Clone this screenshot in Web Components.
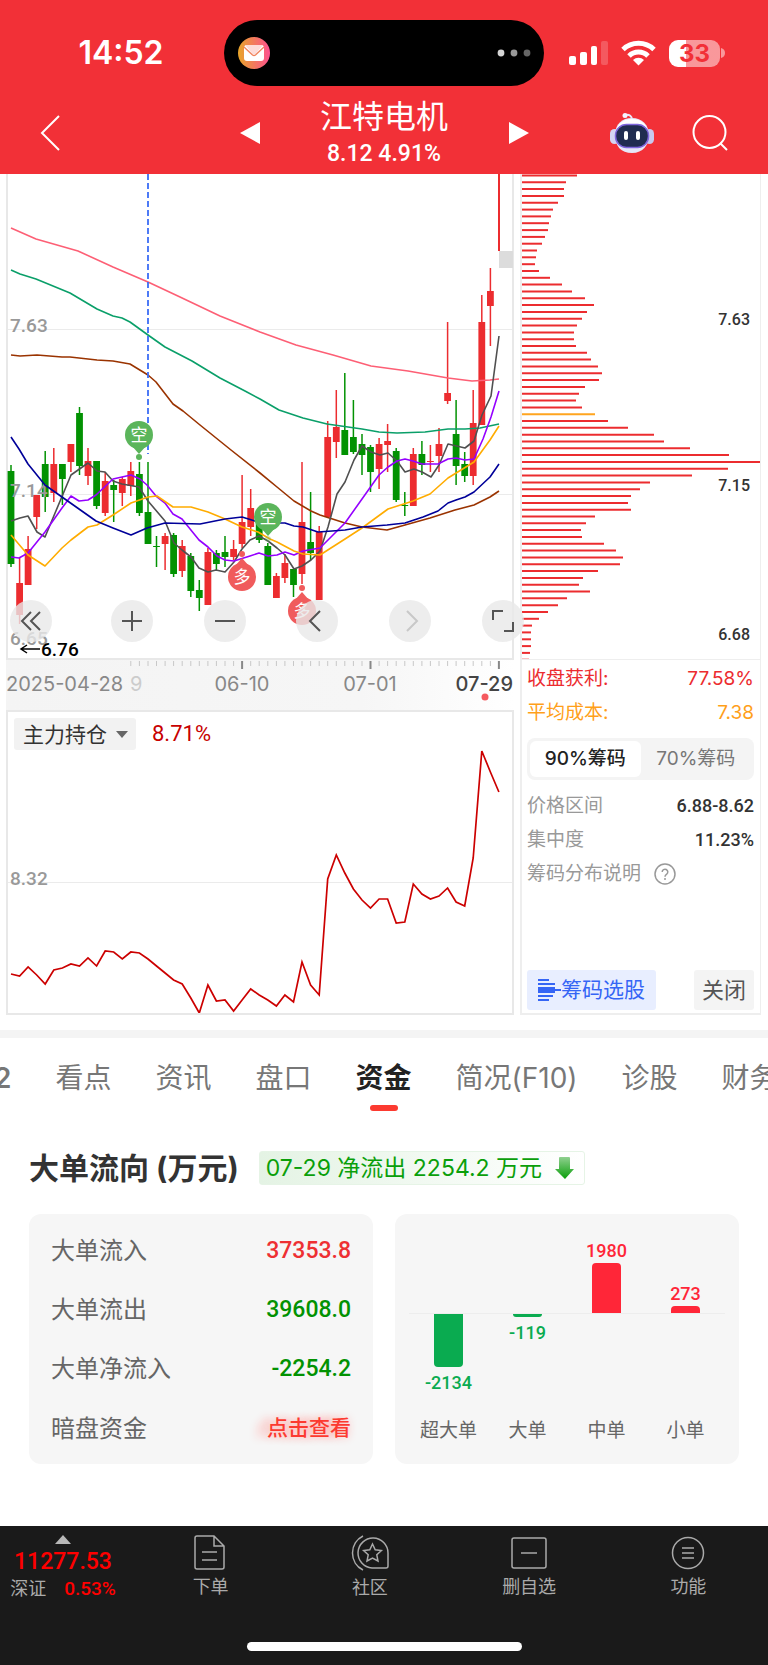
<!DOCTYPE html>
<html lang="zh-CN">
<head>
<meta charset="utf-8">
<meta name="viewport" content="width=device-width, initial-scale=1">
<title>江特电机</title>
<style>
  body {
    margin: 0;
    background: #fff;
    color: #333;
    font-family: Inter, "Noto Sans CJK SC", sans-serif;
    --num: Roboto, "Noto Sans CJK SC", sans-serif;
    --red: #f23037;
  }
  main {
    display: grid;
    grid-template-columns: minmax(0, 508fr) minmax(0, 241fr);
    gap: 6px;
    padding: 0 7px 0 6px;
  }
</style>
</head>
<body>
<status-bar>14:52</status-bar>
<stock-header>
  <span slot="name">江特电机</span>
  <span slot="quote">8.12 4.91%</span>
</stock-header>
<main>
  <div class="charts">
    <kline-chart></kline-chart>
    <hold-chart value="8.71%"></hold-chart>
  </div>
  <chip-panel></chip-panel>
</main>
<tab-strip></tab-strip>
<fund-flow></fund-flow>
<bottom-bar></bottom-bar>

<script>
// every element fills its shadow root the same way
class BaseElement extends HTMLElement {
  constructor() {
    super();
    this.attachShadow({mode:'open'});
    const temp = document.createElement('template');
    temp.innerHTML = this.render();
    this.shadowRoot.appendChild(temp.content.cloneNode(true));
  }
}

// Status bar
class StatusBar extends BaseElement {
  render() {
    return `
    <style>
    :host {
      display: grid;
      grid-template-columns: 1fr 320px 1fr;
      align-items: center;
      padding-top: 20px;
      background: var(--red);
      color: #fff;
    }
    .time { padding-left: 18px; text-align: center; font-size: 32px; line-height: 40px; font-weight: 600; }
    .island {
      display: flex;
      align-items: center;
      justify-content: space-between;
      box-sizing: border-box;
      height: 66px;
      padding: 0 13px;
      border-radius: 33px;
      background: #000;
    }
    .right { display: flex; align-items: center; gap: 13px; padding-left: 25px; }
    .battery { display: flex; align-items: center; gap: 1px; }
    .level {
      width: 51px;
      border-radius: 9px;
      background: linear-gradient(90deg, #fff 17px, rgba(255,255,255,.5) 17px);
      color: var(--red);
      text-align: center;
      font-size: 24px;
      line-height: 27px;
      font-weight: 700;
    }
    </style>
    <div class="time"><slot></slot></div>
    <div class="island">
      <svg width="34" height="34" viewBox="0 0 34 34">
        <defs><linearGradient id="m"><stop offset="0" stop-color="#e8a529"/><stop offset="1" stop-color="#fd5090"/></linearGradient></defs>
        <circle cx="17" cy="17" r="16" fill="url(#m)"/>
        <rect x="7" y="9" width="20" height="16" rx="3" fill="#fff"/>
        <path d="M8 9h18l-7.500 9q-1.500 1.500-3 0z" fill="#fddcd8"/>
        <path d="M7 11l8.500 8q1.500 1.200 3 0L27 11" fill="none" stroke="#f0825a" stroke-width="1.300"/>
      </svg>
      <svg width="34" height="8" viewBox="0 0 34 8">
        <circle cx="4" cy="4" r="3.400" fill="#d5d5d5"/><circle cx="17" cy="4" r="3.400" fill="#999"/><circle cx="30" cy="4" r="3.400" fill="#666"/>
      </svg>
    </div>
    <div class="right">
      <svg width="39" height="24" viewBox="0 0 39 24" fill="#fff">
        <rect y="15" width="7" height="9" rx="2"/><rect x="11" y="11" width="7" height="13" rx="2"/>
        <rect x="22" y="5" width="6" height="19" rx="2"/><rect x="32" width="7" height="24" rx="2" opacity=".2"/>
      </svg>
      <svg width="35" height="26" viewBox="0 0 35 26" fill="none" stroke="#fff" stroke-width="5">
        <path d="M2 9.500a22.500 22.500 0 0 1 31 0M8 16a13.500 13.500 0 0 1 19 0"/>
        <path d="M12 20a8 8 0 0 1 11 0l-5.500 5.500z" fill="#fff" stroke="none"/>
      </svg>
      <div class="battery">
        <div class="level">33</div>
        <svg width="4" height="10" viewBox="0 0 4 10"><path d="M0 0q4 1 4 5t-4 5z" fill="#fff" opacity=".5"/></svg>
      </div>
    </div>`;
  }
}

// Title bar
class StockHeader extends BaseElement {
  render() {
    return `
    <style>
    :host {
      display: grid;
      grid-template-columns: 1fr 290px 1fr;
      align-items: center;
      height: 76px;
      padding: 11px 0 1px;
      background: var(--red);
      color: #fff;
    }
    button { display: block; padding: 0; border: 0; background: none; color: inherit; font: inherit; }
    .mid { display: flex; align-items: center; justify-content: space-between; }
    .title { padding-bottom: 3px; text-align: center; }
    h1 { margin: 0; font-size: 32px; line-height: 36px; font-weight: 400; }
    p { margin: 0; padding-top: 5px; font: 500 23px/28px var(--num); }
    .back { justify-self: start; margin-left: 40px; }
    .tools { display: flex; align-items: center; justify-content: flex-end; gap: 38px; padding-right: 40px; }
    </style>
    <button class="back" aria-label="返回">
      <svg width="20" height="38" viewBox="0 0 20 38" fill="none" stroke="#fff" stroke-width="2"><path d="M19 2L2 19l17 17"/></svg>
    </button>
    <div class="mid">
      <button aria-label="上一只"><svg width="21" height="24" viewBox="0 0 21 24"><path d="M1 12L21 1v22z" fill="#fff"/></svg></button>
      <div class="title">
        <h1><slot name="name"></slot></h1>
        <p><slot name="quote"></slot></p>
      </div>
      <button aria-label="下一只"><svg width="21" height="24" viewBox="0 0 21 24"><path d="M21 12L1 1v22z" fill="#fff"/></svg></button>
    </div>
    <div class="tools">
      <button aria-label="智能助手">
        <svg width="44" height="42" viewBox="0 0 44 42">
          <path d="M15 3q7-1 7 5" fill="none" stroke="#e8e8fa" stroke-width="2"/>
          <circle cx="15" cy="3.500" r="2.500" fill="#f4f4ff"/>
          <rect x="0" y="17" width="9" height="15" rx="4.500" fill="#d4d4f2"/><rect x="35" y="17" width="9" height="15" rx="4.500" fill="#c9c9ee"/>
          <path d="M22 6C32 6 39 13 39 23S33 41 22 41 5 34 5 23 12 6 22 6z" fill="#e6e7f8"/>
          <path d="M22 7c8 0 13 4 15 9H7c2-5 7-9 15-9z" fill="#fff"/>
          <rect x="5.500" y="12.500" width="33" height="23" rx="11" fill="#202c50" stroke="#7f66dc" stroke-width="1.500"/>
          <rect x="14" y="19" width="4" height="9" rx="2" fill="#fff"/><rect x="26" y="19" width="4" height="9" rx="2" fill="#fff"/>
        </svg>
      </button>
      <button aria-label="搜索">
        <svg width="36" height="36" viewBox="0 0 36 36" fill="none" stroke="#fff" stroke-width="2"><circle cx="17.500" cy="17" r="16"/><path d="M28 28l7 7"/></svg>
      </button>
    </div>`;
  }
}

// x of the n-th trading day, shared by both charts
const dayX = n => +(11 + n * 8.56).toFixed(1);

// Candles: colour, high, body top, body bottom, low
const candles = [
  ['g',465,471,564,567],['r',557,583,615,624],['r',536,549,585,585],['r',495,495,517,529],['g',451,464,497,512],
  ['r',448,464,493,502],['g',464,464,479,505],['r',444,444,462,472],['g',407,413,466,475],['r',448,461,476,485],
  ['g',461,461,506,509],['r',472,481,513,516],['g',480,485,490,522],['r',477,479,493,506],['r',462,471,486,496],
  ['g',462,474,513,516],['g',462,512,544,544],['g',536,546,547,567],['r',533,536,544,570],['g',533,535,574,577],
  ['r',540,546,571,577],['g',553,556,591,597],['g',580,590,598,611],['r',548,552,605,605],['g',550,553,564,570],
  ['g',536,552,557,567],['r',540,549,557,560],['r',475,522,544,548],['r',489,508,527,536],['g',515,515,540,543],
  ['g',543,546,585,585],['r',573,576,598,598],['r',554,563,578,583],['g',569,569,585,597],['r',462,522,574,584],
  ['g',492,542,553,560],['r',526,532,600,600],['r',421,437,517,517],['r',390,427,442,458],['g',373,430,455,455],
  ['g',400,437,452,454],['g',434,444,455,475],['g',445,447,472,492],['r',438,444,469,489],['r',424,441,445,472],
  ['g',448,451,500,502],['g',492,505,506,516],['r',448,454,506,506],['g',441,454,465,475],['r',445,461,462,472],
  ['r',428,444,456,472],['r',322,393,401,404],['g',400,434,466,485],['g',452,464,476,482],['r',390,423,476,485],
  ['r',295,322,425,425],['r',268,291,306,346]
];

const averages = {
  '#fd5f75': '11,228 36,239 78,251 113,267 148,282 180,297 220,316 260,332 296,345 333,355 371,366 408,371 448,378 472,381 490,380 499,379',
  '#0a9f69': '11,270 20,274 36,279 70,293 97,309 113,316 122,318 130,322 148,335 165,347 192,361 220,378 245,391 260,399 279,410 303,418 327,424 362,429 379,432 397,433 425,432 448,429 465,429 480,428 499,424',
  '#9a3300': '11,355 20,356 37,355 62,357 70,357 97,360 113,361 130,364 148,375 156,382 173,404 183,411 200,425 231,450 260,473 277,487 294,501 311,511 320,515 345,523 362,527 387,530 405,525 430,518 455,510 474,505 490,497 499,491',
  '#505050': '11,521 20,518 28,516 37,532 45,537 71,475 88,463 97,471 105,472 113,481 122,484 139,487 148,501 165,521 174,543 182,550 191,557 199,568 208,572 216,570 225,572 234,562 242,549 250,540 259,536 268,541 277,548 285,555 294,569 302,566 311,560 320,551 328,527 337,494 345,482 354,460 362,446 371,452 380,455 388,453 397,461 405,472 414,469 422,472 431,477 439,465 448,444 465,448 474,441 482,415 491,396 499,336',
  '#9500ff': '11,557 19,558 28,553 45,532 62,508 71,496 79,501 88,500 96,495 113,479 131,475 140,479 147,485 156,496 165,503 173,514 182,519 199,540 208,547 217,556 225,560 234,561 250,556 259,553 268,556 277,555 285,552 294,555 303,551 320,548 345,523 362,499 379,475 388,467 397,461 405,459 413,461 422,464 438,464 448,459 456,458 465,460 474,459 483,439 491,417 499,391',
  '#ffac00': '11,535 28,555 45,566 62,548 71,540 88,527 97,525 113,515 131,503 148,497 157,496 173,507 191,507 208,512 225,519 242,527 258,532 270,539 277,542 294,551 303,554 320,555 345,539 362,528 388,509 413,501 430,494 448,478 474,462 490,440 499,426',
  '#000099': '11,437 19,449 28,464 45,485 62,497 79,509 96,521 113,528 131,535 147,528 165,523 200,524 225,519 242,517 255,521 270,523 285,523 294,526 303,527 318,532 332,531 345,530 362,527 387,525 405,523 423,517 438,511 448,503 456,500 465,497 474,492 490,477 499,464'
};

class KlineChart extends BaseElement {
  render() {
    const bars = candles.map(([c, hi, top, bottom, lo], i) => {
      const x = dayX(i), fill = c === 'r' ? '#ec2c2f' : '#029202';
      return `<path d="M${x} ${hi}V${lo}" stroke="${fill}" stroke-width="1.500"/><rect x="${x - 3.4}" y="${top}" width="6.800" height="${bottom - top}" fill="${fill}"/>`;
    }).join('');
    const lines = Object.entries(averages).map(([color, pts]) => `<polyline points="${pts}" stroke="${color}"/>`).join('');
    let ticks = '';
    for (let i = 14; i < 58; i++) {
      const major = [27, 42, 57].includes(i);
      ticks += `<path d="M${dayX(i)} 661v${major ? 8 : 5}" stroke="${major ? '#888' : '#c8c8c8'}" stroke-width="${major ? 2 : 1}"/>`;
    }
    const sell = (x, y, o) => `<g><circle cx="${x}" cy="${y + 22}" r="3" fill="#5bb55b" opacity="${o}"/><circle cx="${x}" cy="${y}" r="14" fill="#5bb55b"/><path d="M${x - 7} ${y + 11}h14l-7 8z" fill="#5bb55b"/><text x="${x}" y="${y + 6}">空</text></g>`;
    const buy = (x, y) => `<g><circle cx="${x}" cy="${y - 23}" r="3" fill="#f05b5c"/><circle cx="${x}" cy="${y}" r="14" fill="#f05b5c"/><path d="M${x - 7} ${y - 11}h14l-7-8z" fill="#f05b5c"/><text x="${x}" y="${y + 6}">多</text></g>`;
    return `
    <style>
    :host { display: block; position: relative; z-index: 1; }
    .plot { display: block; width: 100%; }
    .scale { font: 500 19px var(--num); fill: #999; }
    .dates { font-size: 20px; fill: #888; }
    .marks { font-size: 17px; fill: #fff; text-anchor: middle; }
    .lines { fill: none; stroke-width: 1.6; stroke-linejoin: round; }
    /* round buttons floating over the plot */
    .controls {
      position: absolute;
      left: 4px;
      right: -10px;
      bottom: 68px;
      display: flex;
      justify-content: space-between;
    }
    button {
      width: 42px;
      height: 42px;
      padding: 0;
      border: 0;
      border-radius: 50%;
      background: rgba(232,232,232,.8);
      color: #555;
    }
    button:first-child { margin-right: 8px; }
    button:disabled { color: #c8c8c8; }
    button svg { display: block; margin: auto; fill: none; stroke: currentColor; stroke-width: 2; }
    </style>
    <svg class="plot" viewBox="6 174 508 536">
      <defs><linearGradient id="ax"><stop offset="0" stop-color="#f4f4f4"/><stop offset=".7" stop-color="#f6f6f6"/><stop offset="1" stop-color="#fff"/></linearGradient></defs>
      <rect x="6" y="660" width="508" height="50" fill="url(#ax)"/>
      <path d="M8 329.500h504M8 494.500h504" stroke="#ebebeb"/>
      <path d="M7 174V659H513V174" fill="none" stroke="#e8e8e8" stroke-width="2"/>
      <rect x="499" y="251" width="14" height="17" fill="#dcdcdc"/>
      ${bars}
      <path d="M499 174V251" stroke="#ec2c2f" stroke-width="2"/>
      <g class="scale"><text x="10" y="332">7.63</text><text x="10" y="497">7.14</text><text x="10" y="645">6.65</text></g>
      <g class="lines">${lines}</g>
      <path d="M148 174V454" stroke="#3b6df6" stroke-width="1.800" stroke-dasharray="6 3"/>
      <path d="M40 649H21m6-4l-6 4 6 4" fill="none" stroke="#000" stroke-width="1.500"/>
      <g class="scale"><text x="41" y="656" style="fill:#000">6.76</text></g>
      <g class="marks">${sell(139, 435, 1)}${sell(268, 517, .3)}${buy(242, 577)}${buy(302, 611)}</g>
      ${ticks}
      <g class="dates">
        <text x="6" y="691">2025-04-28</text><text x="130" y="691" style="fill:#ccc">9</text>
        <text x="242" y="691" text-anchor="middle">06-10</text><text x="370" y="691" text-anchor="middle">07-01</text>
        <text x="513" y="691" text-anchor="end" style="fill:#444;font-weight:500">07-29</text>
      </g>
      <circle cx="485" cy="697" r="3.500" fill="#f55a5e"/>
    </svg>
    <div class="controls">
      <button aria-label="最早"><svg width="42" height="42"><path d="M21 12l-9 9 9 9M30 12l-9 9 9 9"/></svg></button>
      <button aria-label="放大"><svg width="42" height="42"><path d="M11 21h20M21 11v20"/></svg></button>
      <button aria-label="缩小"><svg width="42" height="42"><path d="M11 21h20"/></svg></button>
      <button aria-label="向左"><svg width="42" height="42"><path d="M24 11l-10 10 10 10"/></svg></button>
      <button aria-label="向右" disabled><svg width="42" height="42"><path d="M18 11l10 10-10 10"/></svg></button>
      <button aria-label="全屏"><svg width="42" height="42"><path d="M11 20v-9h10M31 22v9h-9"/></svg></button>
    </div>`;
  }
}

// Main force holding
const holding = [974,976,967,975,984,970,968,964,966,958,966,951,952,959,952,953,959,966,973,980,984,998,1013,985,1001,1000,1011,1000,989,995,1000,1006,995,1002,962,985,995,879,855,873,889,900,908,899,899,923,922,884,894,899,896,888,902,906,858,751,772,792];

class HoldChart extends BaseElement {
  render() {
    return `
    <style>
    :host { display: block; padding-top: 6px; border: 2px solid #e8e8e8; }
    .head { display: flex; align-items: center; gap: 16px; padding-left: 6px; }
    .pick { position: relative; }
    select {
      appearance: none;
      display: block;
      width: 122px;
      height: 32px;
      padding: 0 9px;
      border: 0;
      border-radius: 3px;
      background: #f2f2f2;
      color: #333;
      font: inherit;
      font-size: 21px;
    }
    .pick svg { position: absolute; right: 8px; top: 13px; pointer-events: none; }
    output { color: #c80000; font: 400 22px/32px var(--num); }
    .plot { display: block; width: 100%; }
    text { font: 500 19px var(--num); fill: #999; }
    </style>
    <div class="head">
      <div class="pick">
        <select aria-label="指标"><option>主力持仓</option></select>
        <svg width="12" height="7"><path d="M0 0h12L6 7z" fill="#666"/></svg>
      </div>
      <output>${this.getAttribute('value')}</output>
    </div>
    <svg class="plot" viewBox="8 750 504 263">
      <path d="M8 882.500h504" stroke="#ebebeb"/>
      <text x="10" y="885">8.32</text>
      <polyline points="${holding.map((y, i) => dayX(i) + ',' + y).join(' ')}" fill="none" stroke="#cc0000" stroke-width="1.700"/>
    </svg>`;
  }
}

// Chip distribution
const chips = [55,44,42,42,36,31,29,27,26,23,20,15,14,13,17,28,40,50,63,72,65,60,55,52,52,54,65,69,76,80,77,63,57,54,60,73,86,106,132,142,168,207,239,206,170,128,118,109,106,109,73,64,59,60,82,94,101,98,76,61,57,68,45,36,26,17,10,9,9,9,8,7];

class ChipPanel extends BaseElement {
  render() {
    const rows = chips.map((w, i) => `<path d="M522 ${(175.5 + i * 6.82).toFixed(1)}h${w}" stroke="${i === 35 ? '#ffa51f' : '#ec2c2f'}"/>`).join('');
    return `
    <style>
    :host {
      display: flex;
      flex-direction: column;
      box-sizing: border-box;
      border: solid #eee;
      border-width: 0 1px 2px 2px;
      font-size: 19px;
      line-height: 34px;
    }
    .plot { display: block; width: 100%; stroke-width: 2; border-bottom: 1px solid #eee; }
    text { font: 500 16px var(--num); fill: #333; text-anchor: end; }
    .info { flex: 1; display: flex; flex-direction: column; padding: 2px 6px 3px 5px; }
    .row { display: flex; justify-content: space-between; white-space: nowrap; }
    .win { color: #ec2c2f; }
    .cost { color: #ff9f1a; }
    .seg { display: flex; margin: 8px 0 9px; padding: 3px; border-radius: 8px; background: #f4f4f4; }
    .seg button {
      flex: 1;
      padding: 0;
      border: 0;
      border-radius: 6px;
      background: none;
      color: #777;
      font: inherit;
      line-height: 36px;
      white-space: nowrap;
    }
    .seg [aria-pressed=true] { background: #fff; color: #222; font-weight: 500; }
    .note { color: #999; }
    .note b { color: #333; font: 500 18px/34px var(--num); }
    .help { justify-content: flex-start; align-items: center; gap: 13px; }
    .acts { display: flex; justify-content: space-between; margin-top: auto; }
    .acts button {
      display: flex;
      align-items: center;
      height: 40px;
      padding: 0 8px;
      border: 0;
      border-radius: 3px;
      background: #f4f4f4;
      color: #555;
      font: inherit;
      font-size: 22px;
      white-space: nowrap;
    }
    .acts .choose { padding: 0 11px; background: #e8eeff; color: #3565f5; font-size: 21px; }
    </style>
    <svg class="plot" viewBox="522 174 238 485">
      ${rows}
      <g stroke="none"><text x="750" y="325">7.63</text><text x="750" y="491">7.15</text><text x="750" y="640">6.68</text></g>
    </svg>
    <div class="info">
      <div class="row win"><span>收盘获利:</span><span>77.58%</span></div>
      <div class="row cost"><span>平均成本:</span><span>7.38</span></div>
      <div class="seg"><button aria-pressed="true">90%筹码</button><button aria-pressed="false">70%筹码</button></div>
      <div class="row note">价格区间<b>6.88-8.62</b></div>
      <div class="row note">集中度<b>11.23%</b></div>
      <div class="row note help">筹码分布说明
        <svg width="22" height="22" viewBox="0 0 22 22" fill="none" stroke="#999" stroke-width="1.500"><circle cx="11" cy="11" r="10"/><path d="M8.200 9a2.800 2.800 0 1 1 4.500 2.200q-1.700 1.200-1.700 2.600M11 15v2"/></svg>
      </div>
      <div class="acts">
        <button class="choose"><svg width="23" height="22" viewBox="0 0 23 22" stroke="#3565f5" stroke-width="2"><path d="M0 1h11M0 5h17M0 9h17M0 13h17M0 17h15M0 21h11M0 11h23"/></svg>筹码选股</button>
        <button>关闭</button>
      </div>
    </div>`;
  }
}

// Tabs, scrolled a little to the right
class TabStrip extends BaseElement {
  render() {
    const tabs = ['看点', '资讯', '盘口', '资金', '简况(F10)', '诊股', '财务'];
    return `
    <style>
    :host { display: block; margin-top: 15px; border-top: 8px solid #f4f4f4; overflow: hidden; }
    nav { display: flex; gap: 44px; margin-left: -6px; padding-top: 20px; }
    a { flex: none; color: #777; text-decoration: none; font-size: 28px; line-height: 40px; white-space: nowrap; }
    .cut { font-weight: 600; }
    .on { color: #222; font-weight: 700; }
    .on::after { content: ''; display: block; width: 28px; height: 6px; margin: 7px auto 0; border-radius: 3px; background: #fc3a30; }
    </style>
    <nav><a class="cut" href="#">2</a>${tabs.map(t => `<a href="#"${t === '资金' ? ' class="on"' : ''}>${t}</a>`).join('')}</nav>`;
  }
}

// Big order flow
const orders = [['超大单', -2134, 53], ['大单', -119, 3], ['中单', 1980, 50], ['小单', 273, 7]];

class FundFlow extends BaseElement {
  render() {
    const cols = orders.map(([name, value, h]) => {
      const bar = `<i style="height:${h}px"></i>`, num = `<b>${value}</b>`;
      return value > 0
        ? `<div class="col"><div class="up">${num}${bar}</div><div class="down"></div>${name}</div>`
        : `<div class="col"><div class="up"></div><div class="down">${bar}${num}</div>${name}</div>`;
    }).join('');
    return `
    <style>
    :host { display: block; padding: 37px 29px 62px; }
    header { display: flex; align-items: center; gap: 20px; }
    h2 { margin: 0; color: #333; font-size: 30px; line-height: 40px; font-weight: 700; white-space: nowrap; }
    .net {
      display: flex;
      align-items: center;
      gap: 13px;
      padding: 0 10px 0 6px;
      border: 1px solid #e6f4e6;
      border-radius: 3px;
      background: linear-gradient(90deg, #e4f3e4, #fff);
      color: #0a9f0a;
      font-size: 23px;
      line-height: 32px;
      white-space: nowrap;
    }
    .cards { display: grid; grid-template-columns: 1fr 1fr; gap: 22px; margin-top: 26px; }
    .card { box-sizing: border-box; height: 250px; border-radius: 12px; background: #f6f6f6; }
    dl { margin: 0; padding: 7px 22px; }
    dl div { display: flex; justify-content: space-between; align-items: center; line-height: 59px; }
    dt { color: #666; font-size: 24px; }
    dd { margin: 0; color: #029202; font: 500 23px/59px var(--num); }
    .in { color: #ee3033; }
    dd a { color: #fc3a30; font-size: 21px; text-decoration: none; text-shadow: 0 0 8px #fdb5b2, -12px 0 8px #fdb5b2; }
    .bars { position: relative; display: flex; padding: 0 14px; }
    .col { flex: 1; color: #666; text-align: center; font-size: 19px; line-height: 28px; }
    .up, .down { display: flex; flex-direction: column; align-items: center; box-sizing: border-box; height: 100px; }
    .up { justify-content: flex-end; border-bottom: 1px solid #ededed; color: #ff2638; }
    .down { height: 103px; color: #0aab50; }
    i { flex: none; width: 29px; background: currentColor; }
    .up i { border-radius: 4px 4px 0 0; }
    .down i { border-radius: 0 0 4px 4px; }
    b { padding: 0 0 1px; font: 500 18px/22px var(--num); }
    .down b { padding: 5px 0 0; }
    </style>
    <header>
      <h2>大单流向 (万元)</h2>
      <div class="net">07-29 净流出 2254.2 万元
        <svg width="19" height="22" viewBox="0 0 19 22"><defs><linearGradient id="d" x2="0" y2="1"><stop offset="0" stop-color="#8fd08f"/><stop offset="1" stop-color="#0a9f0a"/></linearGradient></defs><path d="M5 0h9q1 0 1 1v11h4l-9 10L0 12h4V1q0-1 1-1z" fill="url(#d)"/></svg>
      </div>
    </header>
    <div class="cards">
      <dl class="card">
        <div><dt>大单流入</dt><dd class="in">37353.8</dd></div>
        <div><dt>大单流出</dt><dd>39608.0</dd></div>
        <div><dt>大单净流入</dt><dd>-2254.2</dd></div>
        <div><dt>暗盘资金</dt><dd><a href="#">点击查看</a></dd></div>
      </dl>
      <div class="card bars">${cols}</div>
    </div>`;
  }
}

// Bottom bar
class BottomBar extends BaseElement {
  render() {
    return `
    <style>
    :host { display: block; padding: 9px 0 15px; background: #1a1a1a; color: #aaa; }
    nav { display: flex; height: 107px; }
    a { color: inherit; text-decoration: none; }
    .index { width: 126px; padding-right: 5px; text-align: center; }
    .index svg { display: block; margin: 0 auto; }
    .index b { display: block; padding-top: 4px; color: #f00; font: 500 23px/28px var(--num); }
    .index span { display: flex; justify-content: center; gap: 18px; font-size: 18px; line-height: 26px; }
    .index em { color: #f00; font: 500 19px/26px var(--num); }
    .item { flex: 1; display: flex; flex-direction: column; align-items: center; font-size: 18px; line-height: 26px; }
    .item svg { margin-bottom: 4px; fill: none; stroke: #aaa; stroke-width: 1.5; }
    .home { width: 275px; height: 9px; margin: 0 auto; border-radius: 5px; background: #fff; }
    </style>
    <nav>
      <a class="index" href="#">
        <svg width="16" height="9"><path d="M8 0l8 9H0z" fill="#b8b8b8"/></svg>
        <b>11277.53</b>
        <span>深证<em>0.53%</em></span>
      </a>
      <a class="item" href="#"><svg width="34" height="35" viewBox="0 0 34 35"><path d="M3 1h17l10 10v21q0 2-2 2H3q-2 0-2-2V3q0-2 2-2zM20 1v10h10M8 17h15M8 25h15"/></svg>下单</a>
      <a class="item" href="#"><svg width="38" height="36" viewBox="0 0 38 36"><path d="M12 1a19 19 0 0 0 0 34M37 18v13q0 2-2 2H21a15 15 0 1 1 16-15z"/><path d="M21.500 9l2.700 5.700 6.200.8-4.600 4.300 1.200 6.200-5.500-3-5.500 3 1.200-6.200-4.600-4.300 6.200-.8z"/></svg>社区</a>
      <a class="item" href="#"><svg width="36" height="35" viewBox="0 0 36 35"><rect x="1" y="3" width="34" height="30" rx="2"/><path d="M10 18h16"/></svg>删自选</a>
      <a class="item" href="#"><svg width="34" height="35" viewBox="0 0 34 35"><circle cx="17" cy="18" r="15.500"/><path d="M11 13h12M11 18h12M11 23h12"/></svg>功能</a>
    </nav>
    <div class="home"></div>`;
  }
}

customElements.define('status-bar', StatusBar);
customElements.define('stock-header', StockHeader);
customElements.define('kline-chart', KlineChart);
customElements.define('hold-chart', HoldChart);
customElements.define('chip-panel', ChipPanel);
customElements.define('tab-strip', TabStrip);
customElements.define('fund-flow', FundFlow);
customElements.define('bottom-bar', BottomBar);
</script>
</body>
</html>
